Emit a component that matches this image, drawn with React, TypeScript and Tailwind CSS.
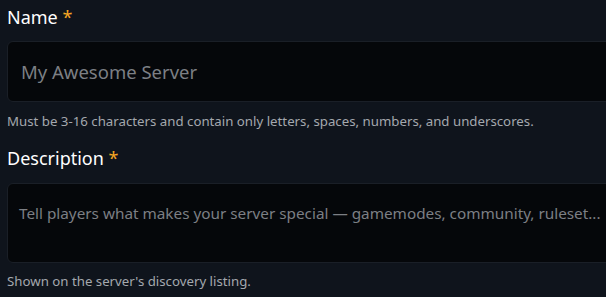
export default function App() {
  return (
    <div
      className="min-h-screen w-[606px] overflow-hidden bg-[#0f141c] pl-[7px] pt-[4px] text-white"
      style={{ fontFamily: '"Noto Sans", Lato, sans-serif' }}
    >
      <div className="flex flex-col">
        <label className="text-[18px] leading-[26px]">
          Name <span className="text-[#f5a623]">*</span>
        </label>
        <div className="mt-[11px] flex h-[61px] w-[620px] items-center rounded-[6px] border border-[#1a1f27] bg-[#05070a] px-[13px]">
          <span className="text-[18.5px] text-[#7c7f84]">My Awesome Server</span>
        </div>
        <p className="mt-[10px] text-[13.25px] leading-[19px] text-[#a4a8ae]">
          Must be 3-16 characters and contain only letters, spaces, numbers, and underscores.
        </p>
        <label className="mt-[14px] text-[18px] leading-[26px]">
          Description <span className="text-[#f5a623]">*</span>
        </label>
        <div className="mt-[12px] h-[80px] w-[620px] rounded-[6px] border border-[#1a1f27] bg-[#05070a] px-[11px] pt-[17px]">
          <span className="whitespace-nowrap text-[15.3px] text-[#7c7f84]">
            Tell players what makes your server special — gamemodes, community, ruleset...
          </span>
        </div>
        <p className="mt-[9px] text-[13.25px] leading-[19px] text-[#a4a8ae]">
          Shown on the server's discovery listing.
        </p>
      </div>
    </div>
  );
}
